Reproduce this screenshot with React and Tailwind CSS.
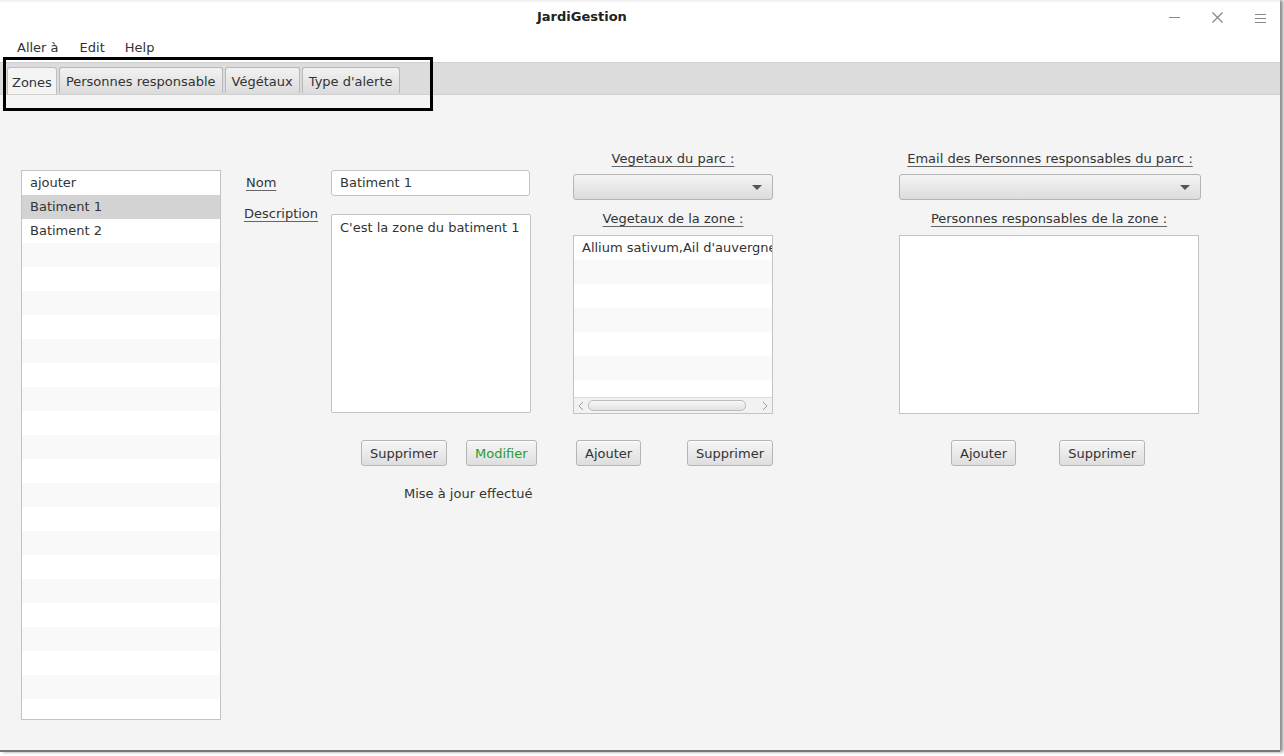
import React from "react";

const font = { fontFamily: '"DejaVu Sans", "Liberation Sans", sans-serif' };

const Btn = ({ children, green }) => (
    <button className={`h-[26px] px-[8px] rounded-[3px] border border-[#b5b5b5] bg-gradient-to-b from-[#f6f6f6] to-[#dedede] text-[13px] leading-none shadow-[inset_0_1px_0_#ffffff] ${green ? "text-[#2e9a2e]" : "text-[#333]"}`}>
        {children}
    </button>
);

const Combo = ({ w }) => (
    <div className={`${w} h-[26px] rounded-[3px] border border-[#b5b5b5] bg-gradient-to-b from-[#f4f4f4] to-[#dcdcdc] flex items-center justify-end pr-[10px]`}>
        <div className="w-0 h-0 border-l-[5px] border-r-[5px] border-t-[5px] border-l-transparent border-r-transparent border-t-[#555]" />
    </div>
);

const Rows = ({ items, count, selected }) => (
    <>
        {Array.from({ length: count }).map((_, i) => (
            <div
                key={i}
                className={`h-[24px] shrink-0 flex items-center px-[8px] text-[13px] text-[#333] whitespace-nowrap ${i === selected ? "bg-[#d3d3d3]" : i % 2 ? "bg-[#f9f9f9]" : "bg-white"}`}
            >
                {items[i] || ""}
            </div>
        ))}
    </>
);

const Tab = ({ label, active }) => (
    <div className={`flex items-center pt-[3px] text-[13px] text-[#333] border border-b-0 rounded-t-[3px] ${active ? "h-[27px] px-[4px] bg-[#f4f4f4] border-[#c0c0c0]" : "h-[26px] px-[6px] mb-[1px] bg-gradient-to-b from-[#f2f2f2] to-[#dcdcdc] border-[#b8b8b8]"}`}>
        {label}
    </div>
);

export default function App() {
    return (
        <div className="w-[1284px] h-[756px] bg-white relative overflow-hidden" style={font}>
            <div className="w-[1280px] h-[752px] flex flex-col bg-[#f4f4f4] border-b-[2px] border-[#777] shadow-[3px_0_3px_rgba(0,0,0,0.45)]">
                {/* title bar */}
                <div className="h-[33px] bg-white border-t-[2px] border-[#f2f2f2] relative flex items-center pl-[537px]">
                    <span className="text-[13px] font-bold text-[#222] leading-[16px] mt-[-2px]">JardiGestion</span>
                    <div className="absolute right-[14px] top-[10px] flex items-center gap-[32px]">
                        <div className="w-[11px] h-[1px] bg-[#888]" />
                        <svg width="11" height="11" viewBox="0 0 11 11">
                            <path d="M0.5 0.5 L10.5 10.5 M10.5 0.5 L0.5 10.5" stroke="#888" strokeWidth="1.3" />
                        </svg>
                        <svg width="11" height="10" viewBox="0 0 11 10">
                            <path d="M0 1.5 H11 M0 5.5 H11 M0 9.5 H11" stroke="#888" strokeWidth="1" />
                        </svg>
                    </div>
                </div>

                {/* menu bar */}
                <div className="h-[29px] bg-white flex items-center pl-[17px] gap-[20px] text-[13px] text-[#333]">
                    <span>Aller à</span>
                    <span className="ml-[1px]">Edit</span>
                    <span>Help</span>
                </div>

                {/* tab bar */}
                <div className="h-[33px] bg-[#dcdcdc] border-t border-[#cfcfcf] border-b border-[#b5b5b5] flex items-end pl-[7px] gap-[2px]">
                    <Tab label="Zones" active />
                    <Tab label="Personnes responsable" />
                    <Tab label="Végétaux" />
                    <Tab label="Type d'alerte" />
                </div>

                {/* content */}
                <div className="flex-1 flex items-start pl-[21px] text-[13px] leading-[16px] text-[#333]">
                    {/* zones list */}
                    <div className="mt-[75px] w-[200px] h-[550px] border border-[#c3c3c3] bg-white flex flex-col overflow-hidden">
                        <Rows items={["ajouter", "Batiment 1", "Batiment 2"]} count={23} selected={1} />
                    </div>

                    {/* labels */}
                    <div className="ml-[23px] mt-[80px] w-[87px] flex flex-col">
                        <span className="underline decoration-[#666] underline-offset-[3px] ml-[2px]">Nom</span>
                        <span className="underline decoration-[#666] underline-offset-[3px] mt-[15px]">Description</span>
                    </div>

                    {/* form */}
                    <div className="mt-[75px] w-[200px] flex flex-col">
                        <div className="h-[26px] w-[199px] rounded-[3px] border border-[#c3c3c3] bg-white flex items-center px-[8px]">
                            Batiment 1
                        </div>
                        <div className="mt-[18px] h-[199px] border border-[#c3c3c3] rounded-[2px] bg-white px-[8px] pt-[5px]">
                            C'est la zone du batiment 1
                        </div>
                        <div className="mt-[27px] flex gap-[19px] pl-[30px] whitespace-nowrap">
                            <Btn>Supprimer</Btn>
                            <Btn green>Modifier</Btn>
                        </div>
                        <span className="mt-[20px] ml-[73px] whitespace-nowrap">Mise à jour effectué</span>
                    </div>

                    {/* vegetaux */}
                    <div className="ml-[42px] mt-[56px] w-[200px] flex flex-col items-center">
                        <span className="underline decoration-[#666] underline-offset-[3px]">Vegetaux du parc :</span>
                        <div className="mt-[7px]"><Combo w="w-[200px]" /></div>
                        <span className="mt-[11px] underline decoration-[#666] underline-offset-[3px]">Vegetaux de la zone :</span>
                        <div className="mt-[8px] w-[200px] h-[179px] border border-[#c3c3c3] bg-white flex flex-col overflow-hidden">
                            <div className="flex-1 flex flex-col overflow-hidden">
                                <Rows items={["Allium sativum,Ail d'auvergne"]} count={7} />
                            </div>
                            <div className="h-[16px] shrink-0 bg-[#f2f2f2] border-t border-[#dcdcdc] flex items-center px-[3px] gap-[3px]">
                                <svg width="8" height="10" viewBox="0 0 8 10"><path d="M6 1 L2 5 L6 9" stroke="#999" fill="none" /></svg>
                                <div className="flex-1 h-[11px] rounded-[5px] border border-[#bdbdbd] bg-gradient-to-b from-[#f8f8f8] to-[#e2e2e2] mr-[12px]" />
                                <svg width="8" height="10" viewBox="0 0 8 10"><path d="M2 1 L6 5 L2 9" stroke="#999" fill="none" /></svg>
                            </div>
                        </div>
                        <div className="mt-[26px] w-full flex justify-between pl-[3px]">
                            <Btn>Ajouter</Btn>
                            <Btn>Supprimer</Btn>
                        </div>
                    </div>

                    {/* personnes */}
                    <div className="ml-[126px] mt-[56px] w-[302px] flex flex-col items-center">
                        <span className="underline decoration-[#666] underline-offset-[3px]">Email des Personnes responsables du parc :</span>
                        <div className="mt-[7px]"><Combo w="w-[302px]" /></div>
                        <span className="mt-[11px] underline decoration-[#666] underline-offset-[3px] mr-[2px]">Personnes responsables de la zone :</span>
                        <div className="mt-[8px] w-[300px] h-[179px] self-start border border-[#c3c3c3] bg-white" />
                        <div className="mt-[26px] self-start flex gap-[43px] pl-[52px]">
                            <Btn>Ajouter</Btn>
                            <Btn>Supprimer</Btn>
                        </div>
                    </div>
                </div>
            </div>

            {/* annotation box over the tabs */}
            <div className="absolute left-[3px] top-[57px] w-[430px] h-[54px] border-[3px] border-black pointer-events-none" />
        </div>
    );
}
